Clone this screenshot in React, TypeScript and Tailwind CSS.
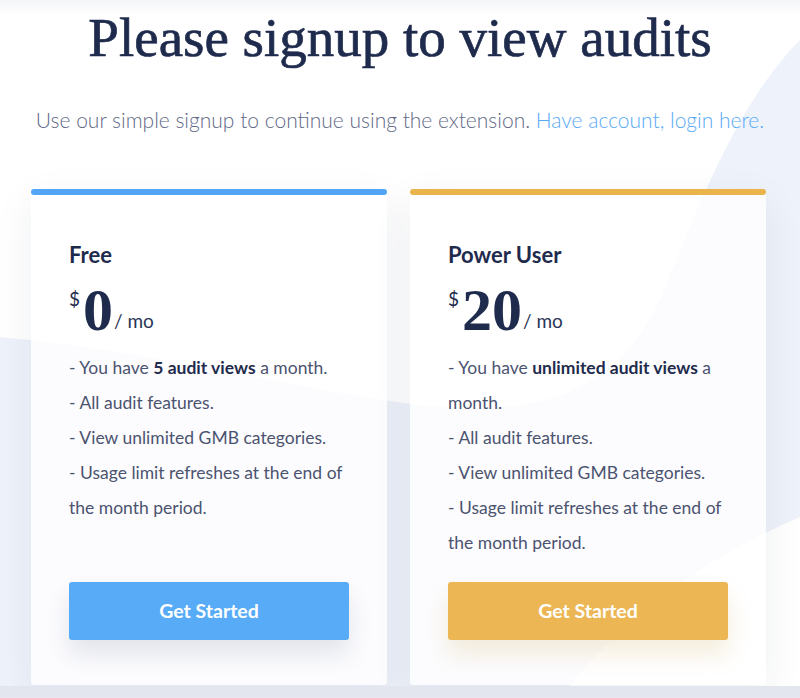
import React from 'react';

interface Plan {
  name: string;
  price: string;
  highlight: string;
  accent: 'blue' | 'yellow';
}

const plans: Plan[] = [
  { name: 'Free', price: '0', highlight: '5 audit views', accent: 'blue' },
  { name: 'Power User', price: '20', highlight: 'unlimited audit views', accent: 'yellow' },
];

const serif = "font-['Liberation_Serif','Times_New_Roman',serif]";

const PlanCard: React.FC<{ plan: Plan }> = ({ plan }) => {
  const isBlue = plan.accent === 'blue';

  return (
    <div className="flex h-[496px] w-[356px] flex-col rounded-[4px] bg-white/80 shadow-[0_12px_40px_rgba(30,42,74,0.07)]">
      <div className={isBlue ? 'h-[6px] rounded-full bg-[#52a5f5]' : 'h-[6px] rounded-full bg-[#ebb34c]'}></div>
      <div className="flex flex-1 flex-col px-[38px] pb-[45px] pt-[46px]">
        <h2 className="text-[22px] font-bold leading-[28px] text-[#1f2b4d]">{plan.name}</h2>

        <div className="mt-[14px] flex items-start text-[#1f2b4d]">
          <span className="mt-[6px] text-[19px] leading-none">$</span>
          <span className={`${serif} ml-[3px] text-[60px] font-bold leading-[54px]`}>{plan.price}</span>
          <span className="ml-[1px] mt-[28px] text-[19px] leading-none text-[#2b3656]">/ mo</span>
        </div>

        <ul className="mt-[13px] text-[17.5px] leading-[35px] text-[#4b5370]">
          <li>
            - You have <b className="font-bold text-[#1f2b4d]">{plan.highlight}</b> a month.
          </li>
          <li>- All audit features.</li>
          <li>- View unlimited GMB categories.</li>
          <li>- Usage limit refreshes at the end of the month period.</li>
        </ul>

        <button
          className={
            isBlue
              ? 'mt-auto h-[58px] w-full rounded-[3px] bg-[#58abf7] text-[19.5px] font-bold text-white shadow-[0_14px_24px_rgba(40,60,100,0.12)]'
              : 'mt-auto h-[58px] w-full rounded-[3px] bg-[#ecb654] text-[19.5px] font-bold text-white shadow-[0_14px_24px_rgba(190,140,40,0.16)]'
          }
        >
          Get Started
        </button>
      </div>
    </div>
  );
};

const App: React.FC = () => {
  return (
    <div className="relative h-[698px] w-[800px] overflow-hidden bg-white font-['Lato','Liberation_Sans',sans-serif]">
      {/* soft background shape */}
      <svg className="absolute inset-0" width="800" height="698" viewBox="0 0 800 698">
        <defs>
          <linearGradient id="topfade" x1="0" y1="0" x2="0" y2="1">
            <stop offset="0" stopColor="#f4f5f8" />
            <stop offset="1" stopColor="#ffffff" />
          </linearGradient>
        </defs>
        <rect x="0" y="0" width="800" height="14" fill="url(#topfade)" />
        <path
          d="M0 337 C 150 350 300 390 420 405 C 560 420 620 380 660 300 C 700 200 740 100 800 40 L 800 517 C 700 560 620 620 560 698 L 0 698 Z"
          fill="#eef2fa"
        />
      </svg>

      <div className="relative flex flex-col">
        <h1
          className={`${serif} pt-[8px] text-center text-[55px] leading-[60px] text-[#1f2b4d] [-webkit-text-stroke:0.7px_#1f2b4d]`}
        >
          Please signup to view audits
        </h1>
        <p className="mt-[38px] text-center text-[21px] font-light leading-[28px] text-[#5f6986]">
          Use our simple signup to continue using the extension.{' '}
          <a className="text-[#58aaf6]">Have account, login here.</a>
        </p>

        <div className="ml-[31px] mt-[55px] flex gap-[23px]">
          {plans.map((plan) => (
            <PlanCard key={plan.name} plan={plan} />
          ))}
        </div>

        <div className="mt-[1px] h-[12px] bg-[#e3e6ee]"></div>
      </div>
    </div>
  );
};

export default App;
